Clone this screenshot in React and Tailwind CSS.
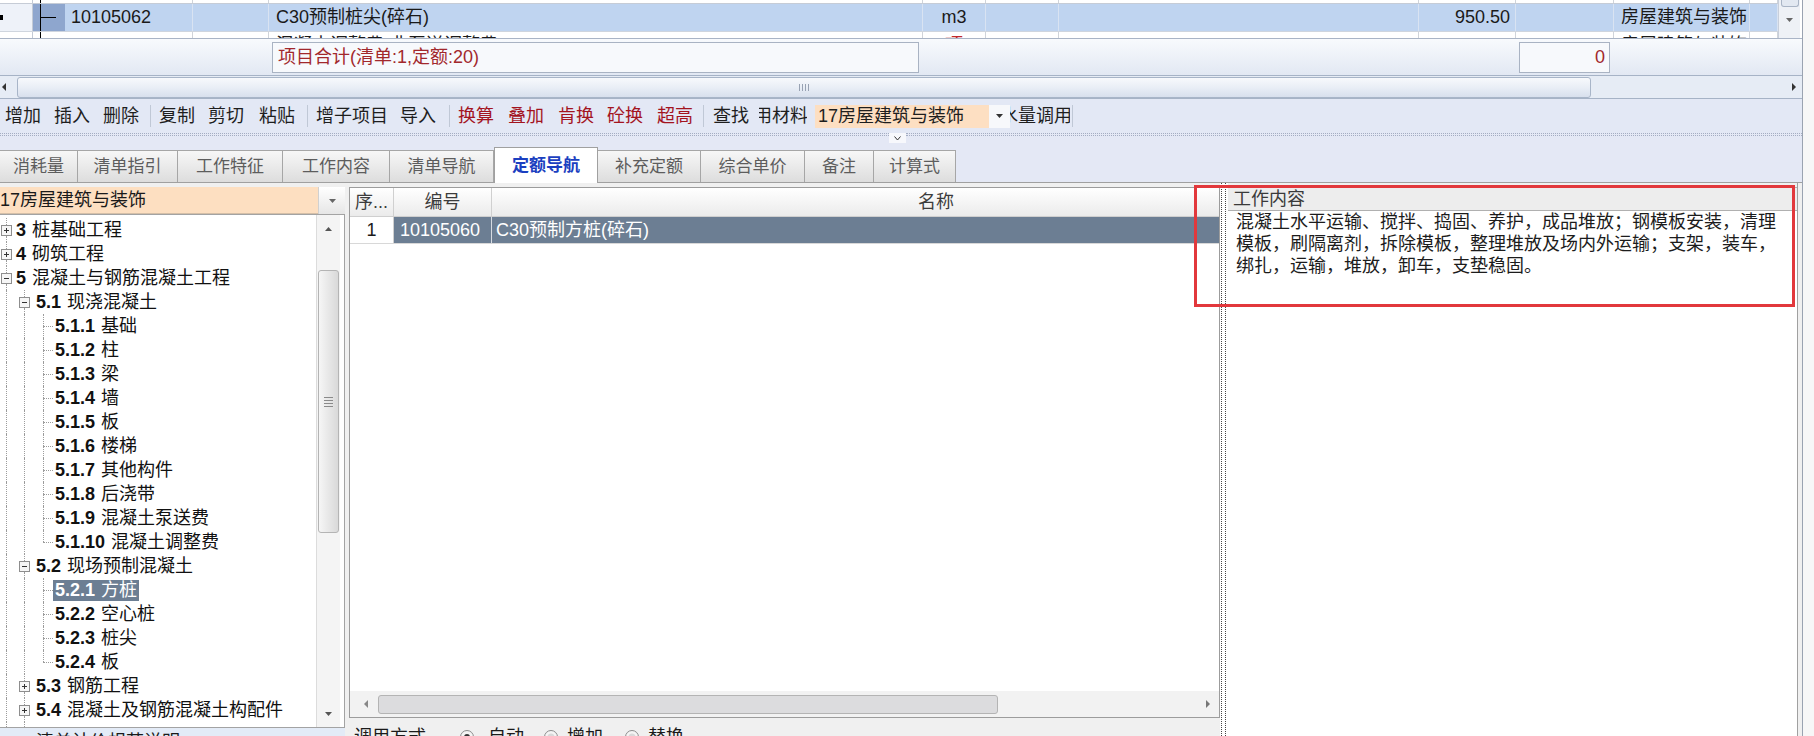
import React from "react";

// column widths of the upper bill grid
const COLS = [
  "w-[33px]", "w-[32px]", "w-[128px]", "w-[76px]", "w-[654px]", "w-[63px]",
  "w-[73px]", "w-[360px]", "w-[97px]", "w-[98px]", "w-[136px]", "w-[28px]",
];

const TREE = [
  { lv: 0, num: "3", name: "桩基础工程" },
  { lv: 0, num: "4", name: "砌筑工程" },
  { lv: 0, num: "5", name: "混凝土与钢筋混凝土工程", open: true },
  { lv: 1, num: "5.1", name: "现浇混凝土", open: true },
  { lv: 2, num: "5.1.1", name: "基础" },
  { lv: 2, num: "5.1.2", name: "柱" },
  { lv: 2, num: "5.1.3", name: "梁" },
  { lv: 2, num: "5.1.4", name: "墙" },
  { lv: 2, num: "5.1.5", name: "板" },
  { lv: 2, num: "5.1.6", name: "楼梯" },
  { lv: 2, num: "5.1.7", name: "其他构件" },
  { lv: 2, num: "5.1.8", name: "后浇带" },
  { lv: 2, num: "5.1.9", name: "混凝土泵送费" },
  { lv: 2, num: "5.1.10", name: "混凝土调整费", last: true },
  { lv: 1, num: "5.2", name: "现场预制混凝土", open: true },
  { lv: 2, num: "5.2.1", name: "方桩", sel: true },
  { lv: 2, num: "5.2.2", name: "空心桩" },
  { lv: 2, num: "5.2.3", name: "桩尖" },
  { lv: 2, num: "5.2.4", name: "板", last: true },
  { lv: 1, num: "5.3", name: "钢筋工程" },
  { lv: 1, num: "5.4", name: "混凝土及钢筋混凝土构配件" },
];

const TABS = [
  { t: "消耗量", w: "w-[78px]" },
  { t: "清单指引", w: "w-[100px]" },
  { t: "工作特征", w: "w-[105px]" },
  { t: "工作内容", w: "w-[107px]" },
  { t: "清单导航", w: "w-[104px]" },
  { t: "定额导航", w: "w-[104px]", active: true },
  { t: "补充定额", w: "w-[103px]" },
  { t: "综合单价", w: "w-[104px]" },
  { t: "备注", w: "w-[69px]" },
  { t: "计算式", w: "w-[82px]" },
];

const VL = "border-l border-dotted border-[#9c9c9c]";

const Tri = ({ dir = "down", color = "#555" }) => {
  if (dir === "down")
    return (
      <svg width="7" height="4" viewBox="0 0 7 4"><polygon points="0,0 7,0 3.5,4" fill={color} /></svg>
    );
  if (dir === "up")
    return (
      <svg width="7" height="4" viewBox="0 0 7 4"><polygon points="0,4 7,4 3.5,0" fill={color} /></svg>
    );
  if (dir === "left")
    return (
      <svg width="4" height="8" viewBox="0 0 4 8"><polygon points="4,0 4,8 0,4" fill={color} /></svg>
    );
  return (
    <svg width="4" height="8" viewBox="0 0 4 8"><polygon points="0,0 0,8 4,4" fill={color} /></svg>
  );
};

const ExpBox = ({ open }) => (
  <svg width="11" height="11" viewBox="0 0 11 11" className="shrink-0">
    <rect x="0.5" y="0.5" width="10" height="10" fill="#f6f6f6" stroke="#8e8e8e" />
    <path d="M3 5.5h5" stroke="#333" />
    {!open && <path d="M5.5 3v5" stroke="#333" />}
  </svg>
);

const Radio = ({ on }) => (
  <svg width="14" height="14" viewBox="0 0 14 14" className="shrink-0">
    <circle cx="7" cy="7" r="6.5" fill="#f4f4f4" stroke="#8c8c8c" />
    <circle cx="7" cy="7" r={on ? 3 : 3.5} fill={on ? "#333" : "#d9d9d9"} />
  </svg>
);

function GridRow({ sel, cells = {}, h }) {
  return (
    <div className={`flex shrink-0 ${h} ${sel ? "bg-[#bfd4f0]" : "bg-white"}`}>
      {COLS.map((w, i) => {
        if (i === 0)
          return (
            <div key={i} className={`${w} shrink-0 h-full flex items-center border-r border-[#c3cad6] ${sel ? "bg-[#eef2f9]" : "bg-white"}`}>
              {sel && <div className="w-[3px] h-[5px] bg-black" />}
            </div>
          );
        if (i === 1)
          return (
            <div key={i} className={`${w} shrink-0 h-full flex items-center ${sel ? "bg-[#8ea6ce]" : "bg-white"}`}>
              <div className="ml-[7px] w-px h-full bg-black" />
              {sel && <div className="w-[15px] h-px bg-black" />}
            </div>
          );
        const c = cells[i];
        return (
          <div key={i} className={`${w} shrink-0 h-full flex items-center overflow-hidden whitespace-nowrap border-r ${sel ? "border-[#d9e3f2]" : "border-[#d0d4da]"} ${c ? c.cls : ""}`}>
            {c ? c.t : null}
          </div>
        );
      })}
    </div>
  );
}

function TreeRow({ it }) {
  return (
    <div className="h-[24px] shrink-0 flex">
      <div className="w-[13px] shrink-0 flex flex-col items-center">
        <div className={`flex-1 ${VL}`} />
        {it.lv === 0 && <ExpBox open={it.open} />}
        {it.lv === 0 && <div className={`flex-1 ${VL}`} />}
      </div>
      {it.lv >= 1 && (
        <div className="w-[23px] shrink-0 flex flex-col items-center">
          <div className={`flex-1 ${VL}`} />
          {it.lv === 1 && <ExpBox open={it.open} />}
          {it.lv === 1 && <div className={`flex-1 ${VL}`} />}
        </div>
      )}
      {it.lv === 2 && (
        <div className="w-[17px] shrink-0 flex flex-col">
          <div className={`flex-1 ml-[7px] ${VL}`} />
          <div className="ml-[7px] w-[10px] border-t border-dotted border-[#9c9c9c]" />
          <div className={`flex-1 ml-[7px] ${it.last ? "" : VL}`} />
        </div>
      )}
      <div className={`flex items-center whitespace-nowrap ${it.lv === 0 ? "pl-[3px]" : ""}`}>
        <span className={`h-[21px] flex items-center ${it.lv === 2 ? "px-[2px]" : ""} ${it.sel ? "bg-[#6c7e93] text-white" : "text-[#111]"}`}>
          <span className="font-bold">{it.num}</span>
          <span className="ml-[6px]">{it.name}</span>
        </span>
      </div>
    </div>
  );
}

const Sep = ({ cls = "ml-[11px] mr-[8px]" }) => (
  <span className={`${cls} w-px h-[22px] bg-[#c0c8d6] shrink-0`} />
);

export default function App() {
  return (
    <div className="w-[1814px] h-[736px] overflow-hidden flex relative bg-[#f6f6f6] text-[18px] text-[#1a1a1a] font-['Liberation_Sans','Noto_Sans_CJK_SC',sans-serif]">
      <div className="w-[1803px] h-full shrink-0 flex flex-col border-r border-[#9aa3b1] bg-[#e4e8f5]">
        {/* upper bill grid */}
        <div className="h-[39px] shrink-0 flex bg-white border-b border-[#a9b4c6] overflow-hidden">
          <div className="w-[1778px] shrink-0 flex flex-col overflow-hidden">
            <div className="h-[4px] shrink-0 flex flex-col border-b border-[#c6ccd6]">
              <GridRow h="h-[3px]" />
            </div>
            <GridRow
              sel
              h="h-[27px]"
              cells={{
                2: { t: "10105062", cls: "pl-[6px]" },
                4: { t: "C30预制桩尖(碎石)", cls: "pl-[7px]" },
                5: { t: "m3", cls: "justify-center" },
                8: { t: "950.50", cls: "justify-end pr-[5px]" },
                10: { t: "房屋建筑与装饰", cls: "pl-[7px]" },
              }}
            />
            <div className="border-t border-[#cfd5de]">
              <GridRow
                h="h-[27px]"
                cells={{
                  2: { t: "10105077", cls: "pl-[6px]" },
                  4: { t: "混凝土调整费(非泵送调整费)", cls: "pl-[7px]" },
                  5: { t: "项", cls: "justify-center text-[#c0282c]" },
                  8: { t: "12.70", cls: "justify-end pr-[5px]" },
                  10: { t: "房屋建筑与装饰", cls: "pl-[7px]" },
                }}
              />
            </div>
          </div>
          <div className="w-[22px] shrink-0 flex flex-col items-center bg-[#eef1f6] border-l border-[#c8cfdb]">
            <div className="w-[18px] h-[7px] border border-t-0 border-[#a9b4c5] rounded-b-[3px] bg-[#e2e8f1]" />
            <div className="mt-[11px]"><Tri dir="down" color="#666" /></div>
          </div>
        </div>

        {/* totals bar */}
        <div className="h-[36px] shrink-0 flex items-center bg-gradient-to-b from-[#f8fafd] to-[#e2e8f3]">
          <div className="ml-[272px] w-[647px] h-[31px] shrink-0 border border-[#a9b3c3] bg-[#f7f9fc] flex items-center pl-[5px] text-[#a2282c] whitespace-nowrap">
            项目合计(清单:1,定额:20)
          </div>
          <div className="ml-[600px] w-[91px] h-[31px] shrink-0 border border-[#a9b3c3] bg-[#f7f9fc] flex items-center justify-end pr-[4px] text-[#a2282c]">
            0
          </div>
        </div>

        {/* horizontal scrollbar */}
        <div className="h-[24px] shrink-0 flex items-center bg-[#e6ecf5] border-y border-[#a6b3c6]">
          <div className="w-[17px] shrink-0 pl-[2px] flex items-center"><Tri dir="left" color="#333" /></div>
          <div className="w-[1574px] h-[21px] shrink-0 rounded-[3px] border border-[#a8b5c8] bg-gradient-to-b from-[#f7f9fc] via-[#e9eef6] to-[#d8e0ed] flex items-center justify-center gap-[2px]">
            <div className="w-px h-[7px] bg-[#98a2b3]" />
            <div className="w-px h-[7px] bg-[#98a2b3]" />
            <div className="w-px h-[7px] bg-[#98a2b3]" />
            <div className="w-px h-[7px] bg-[#98a2b3]" />
          </div>
          <div className="flex-1 flex justify-end pr-[6px]"><Tri dir="right" color="#333" /></div>
        </div>

        {/* toolbar */}
        <div className="h-[34px] shrink-0 flex items-center pl-[5px] whitespace-nowrap text-[#1e1e1e] bg-[#e3e8f5]">
          <span>增加</span>
          <span className="ml-[13px]">插入</span>
          <span className="ml-[13px]">删除</span>
          <Sep />
          <span>复制</span>
          <span className="ml-[13px]">剪切</span>
          <span className="ml-[15px]">粘贴</span>
          <Sep cls="ml-[12px] mr-[8px]" />
          <span>增子项目</span>
          <span className="ml-[12px]">导入</span>
          <Sep cls="ml-[13px] mr-[8px]" />
          <span className="text-[#a3141f]">换算</span>
          <span className="ml-[14px] text-[#a3141f]">叠加</span>
          <span className="ml-[14px] text-[#a3141f]">肯换</span>
          <span className="ml-[13px] text-[#a3141f]">砼换</span>
          <span className="ml-[14px] text-[#a3141f]">超高</span>
          <Sep cls="ml-[10px] mr-[9px]" />
          <span>查找</span>
          <div className="ml-[10px] w-[48px] shrink-0 overflow-hidden">
            <div className="-ml-[5px]">用材料</div>
          </div>
          <div className="ml-[8px] w-[174px] h-[23px] shrink-0 bg-[#fddfc2] flex items-center pl-[3px]">17房屋建筑与装饰</div>
          <div className="w-[21px] h-[23px] shrink-0 bg-[#f7f8fb] flex items-center justify-center"><Tri dir="down" color="#333" /></div>
          <div className="w-[60px] shrink-0 overflow-hidden">
            <div className="-ml-[10px]">水量调用</div>
          </div>
          <Sep cls="ml-[2px]" />
        </div>

        {/* splitter line */}
        <div className="h-[17px] shrink-0 flex items-start">
          <div className="w-[889px] h-[3px] border-y border-dotted border-[#a4adc2]" />
          <div className="w-[17px] h-[10px] bg-[#f7f8fc] flex items-center justify-center">
            <svg width="7" height="5" viewBox="0 0 7 5"><path d="M0.5 0.5L3.5 4L6.5 0.5" fill="none" stroke="#333" /></svg>
          </div>
          <div className="flex-1 h-[3px] border-y border-dotted border-[#a4adc2]" />
        </div>

        {/* tabs */}
        <div className="h-[33px] shrink-0 flex items-end border-b border-[#a0a0a0]">
          {TABS.map((tab) =>
            tab.active ? (
              <div key={tab.t} className={`${tab.w} h-[36px] -mb-px shrink-0 bg-white border-t border-x border-[#a0a0a0] flex items-center justify-center text-[17px] font-bold text-[#1b3fc0]`}>
                {tab.t}
              </div>
            ) : (
              <div key={tab.t} className={`${tab.w} h-[32px] shrink-0 border-t border-r border-[#a6a6a6] bg-gradient-to-b from-[#f7f7f7] to-[#dddddd] flex items-center justify-center text-[17px] text-[#5d5d5d]`}>
                {tab.t}
              </div>
            )
          )}
        </div>

        {/* content */}
        <div className="h-[553px] shrink-0 flex bg-[#f0f0f0]">
          {/* left: chapter tree */}
          <div className="w-[345px] shrink-0 flex flex-col pt-[4px]">
            <div className="h-[27px] shrink-0 flex">
              <div className="w-[318px] shrink-0 bg-[#fddfc1] flex items-center whitespace-nowrap border-b border-[#d4bfa8]">17房屋建筑与装饰</div>
              <div className="w-[27px] shrink-0 bg-gradient-to-b from-white to-[#e6e6e6] border-l border-[#d0d0d0] flex items-center justify-center">
                <Tri dir="down" color="#666" />
              </div>
            </div>
            <div className="h-[514px] shrink-0 flex bg-white border-y border-r border-[#a3a3a3] overflow-hidden">
              <div className="w-[316px] shrink-0 flex flex-col pt-[3px] overflow-hidden">
                {TREE.map((it) => (
                  <TreeRow key={it.num} it={it} />
                ))}
                <div className="flex-1 flex">
                  <div className="w-[13px] flex flex-col items-center"><div className={`flex-1 ${VL}`} /></div>
                  <div className="w-[23px] flex flex-col items-center"><div className={`flex-1 ${VL}`} /></div>
                </div>
              </div>
              <div className="w-[24px] shrink-0 flex flex-col bg-[#f4f4f4] border-l border-[#dcdcdc]">
                <div className="h-[28px] shrink-0 flex items-center justify-center"><Tri dir="up" color="#555" /></div>
                <div className="h-[27px] shrink-0" />
                <div className="h-[263px] shrink-0 mx-[1px] rounded-[3px] border border-[#b4b4b4] bg-gradient-to-r from-[#f6f6f6] to-[#d9d9d9] flex flex-col items-center justify-center gap-[2px]">
                  <div className="w-[9px] h-px bg-[#8a8a8a]" />
                  <div className="w-[9px] h-px bg-[#8a8a8a]" />
                  <div className="w-[9px] h-px bg-[#8a8a8a]" />
                  <div className="w-[9px] h-px bg-[#8a8a8a]" />
                </div>
                <div className="flex-1" />
                <div className="h-[27px] shrink-0 flex items-center justify-center"><Tri dir="down" color="#555" /></div>
              </div>
            </div>
            <div className="flex-1 bg-[#e3ebf7] overflow-hidden whitespace-nowrap pl-[36px] pt-[4px] leading-[20px]">
              清单计价规范说明
            </div>
          </div>

          <div className="w-[4px] shrink-0" />

          {/* middle: quota list */}
          <div className="w-[871px] shrink-0 flex flex-col pt-[4px]">
            <div className="flex-1 flex flex-col bg-white border border-[#9c9c9c]">
              <div className="h-[29px] shrink-0 flex border-b border-[#cfcfcf] bg-gradient-to-b from-white to-[#ebebeb] text-[#3c3c3c]">
                <div className="w-[44px] shrink-0 flex items-center pl-[5px] border-r border-[#d0d0d0] whitespace-nowrap">序...</div>
                <div className="w-[98px] shrink-0 flex items-center justify-center border-r border-[#d0d0d0]">编号</div>
                <div className="flex-1 flex items-center pl-[426px]">名称</div>
              </div>
              <div className="h-[27px] shrink-0 flex border-b border-[#d8d8d8]">
                <div className="w-[44px] shrink-0 flex items-center justify-center border-r border-[#d0d0d0]">1</div>
                <div className="w-[98px] shrink-0 flex items-center pl-[6px] bg-[#6c7e93] text-white border-r border-[#d6dbe2]">10105060</div>
                <div className="flex-1 flex items-center pl-[4px] bg-[#6c7e93] text-white whitespace-nowrap">C30预制方桩(碎石)</div>
              </div>
              <div className="flex-1" />
              <div className="h-[26px] shrink-0 flex items-center bg-[#f2f2f2]">
                <div className="w-[28px] shrink-0 flex justify-end pr-[10px]"><Tri dir="left" color="#888" /></div>
                <div className="w-[620px] h-[19px] shrink-0 rounded-[3px] border border-[#b4b4b4] bg-[#dcdcde]" />
                <div className="flex-1 flex justify-end pr-[9px]"><Tri dir="right" color="#777" /></div>
              </div>
            </div>
            <div className="h-[18px] shrink-0 flex items-start pl-[5px] pt-[9px] leading-[20px] whitespace-nowrap overflow-hidden text-[#1a1a1a]">
              <span>调用方式</span>
              <span className="ml-[34px] mt-[3px]"><Radio on /></span>
              <span className="ml-[14px]">自动</span>
              <span className="ml-[20px] mt-[3px]"><Radio /></span>
              <span className="ml-[9px]">增加</span>
              <span className="ml-[22px] mt-[3px]"><Radio /></span>
              <span className="ml-[9px]">替换</span>
            </div>
          </div>

          {/* splitter */}
          <div className="w-[8px] shrink-0 flex bg-white">
            <div className={`ml-[1px] h-full ${VL} border-[#444]`} />
            <div className={`ml-[3px] h-full ${VL} border-[#444]`} />
          </div>

          {/* right: work content */}
          <div className="w-[569px] shrink-0 flex flex-col pt-[4px]">
            <div className="h-[24px] shrink-0 flex items-center pl-[5px] bg-[#ededed] border-y border-[#b0b0b0] text-[#3a3a3a]">工作内容</div>
            <div className="flex-1 bg-white pl-[8px] leading-[22px] whitespace-nowrap text-[#1c1c1c]">
              <div>混凝土水平运输、搅拌、捣固、养护，成品堆放；钢模板安装，清理</div>
              <div>模板，刷隔离剂，拆除模板，整理堆放及场内外运输；支架，装车，</div>
              <div>绑扎，运输，堆放，卸车，支垫稳固。</div>
            </div>
          </div>

          <div className="w-[5px] shrink-0 bg-[#f0f0f0] border-l border-[#a0a0a0]" />
        </div>
      </div>
      <div className="flex-1 bg-[#f7f7f7]" />

      {/* red annotation frame */}
      <div className="absolute left-[1194px] top-[185px] w-[601px] h-[122px] border-[3px] border-[#e2383c] pointer-events-none" />
    </div>
  );
}
